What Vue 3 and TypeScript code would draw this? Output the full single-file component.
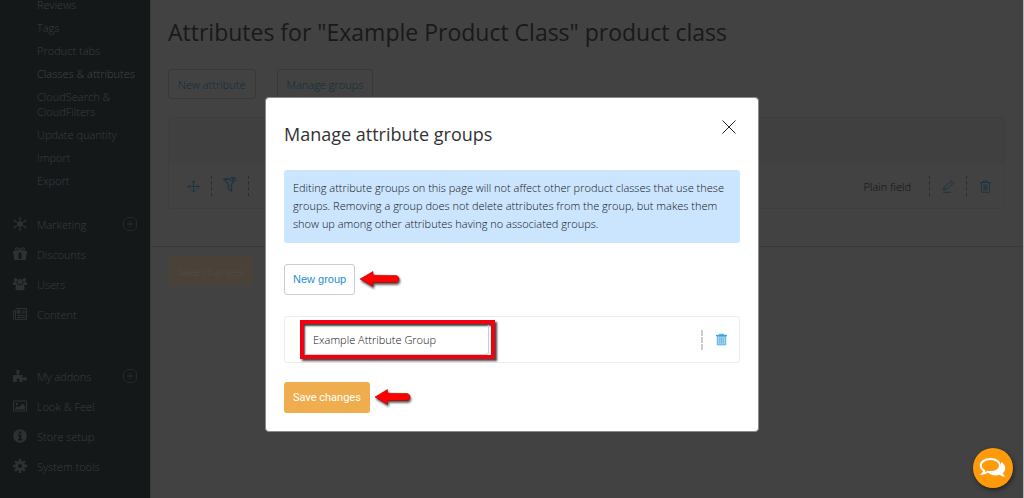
<script setup lang="ts">
import { ref } from 'vue'

interface MenuEntry {
  label: string
  icon: string
  expandable?: boolean
}

const catalogLinks: string[] = [
  'Reviews',
  'Tags',
  'Product tabs',
  'Classes & attributes',
  'CloudSearch & CloudFilters',
  'Update quantity',
  'Import',
  'Export',
]
const currentLink = 'Classes & attributes'

const sections: MenuEntry[][] = [
  [
    { label: 'Marketing', icon: 'hub', expandable: true },
    { label: 'Discounts', icon: 'gift' },
    { label: 'Users', icon: 'users' },
    { label: 'Content', icon: 'news' },
  ],
  [
    { label: 'My addons', icon: 'puzzle', expandable: true },
    { label: 'Look & Feel', icon: 'image' },
    { label: 'Store setup', icon: 'info' },
    { label: 'System tools', icon: 'gear' },
  ],
]

const groupName = ref('Example Attribute Group')
</script>

<template>
  <div class="page">
    <nav class="sidebar" aria-label="Admin menu">
      <ul class="sublinks">
        <li v-for="link in catalogLinks" :key="link">
          <a href="#" :class="{ current: link === currentLink }">{{ link }}</a>
        </li>
      </ul>
      <ul v-for="(section, i) in sections" :key="i" class="section">
        <li v-for="entry in section" :key="entry.label" class="entry">
          <a href="#">
            <svg class="entry-icon" viewBox="0 0 14 14" aria-hidden="true">
              <g v-if="entry.icon === 'hub'">
                <circle cx="7" cy="7" r="2.8" fill="currentColor" />
                <path d="M7 1.5v11M2 4l10 6M12 4L2 10" stroke="currentColor" />
                <g fill="#151819" stroke="currentColor">
                  <circle cx="7" cy="1.4" r="1" /><circle cx="7" cy="12.6" r="1" />
                  <circle cx="1.8" cy="4" r="1" /><circle cx="12.2" cy="4" r="1" />
                  <circle cx="1.8" cy="10" r="1" /><circle cx="12.2" cy="10" r="1" />
                </g>
              </g>
              <g v-else-if="entry.icon === 'gift'">
                <path d="M0 4h14v3.4h-1V13H1V7.400H0z" fill="currentColor" />
                <path d="M7 4C3 4 2.500 3 2.500 2.200 3 .2 5.600.2 7 4 8.400.2 11 .2 11.500 2.200 11.500 3 11 4 7 4z" fill="none" stroke="currentColor" stroke-width="1.200" />
                <path d="M5.600 5.500h2.800v6.500H5.600z" fill="#151819" />
              </g>
              <g v-else-if="entry.icon === 'users'" fill="currentColor">
                <circle cx="2.600" cy="2.800" r="1.900" /><circle cx="11.400" cy="2.800" r="1.900" />
                <circle cx="7" cy="4.600" r="2.700" />
                <path d="M0 8V6.200C0 5 1.600 4.600 3.800 5.200 3.700 6.400 4 7 4.600 8zM14 8V6.200c0-1.200-1.600-1.600-3.800-1C10.300 6.400 10 7 9.400 8z" />
                <path d="M2.400 11.500C2.400 8.500 3.600 7.600 4.800 7.600c1.400 1 3 1 4.400 0 1.200 0 2.400.9 2.400 3.900 0 1.200-.8 1.700-1.800 1.700H4.200c-1 0-1.800-.5-1.800-1.700z" />
              </g>
              <g v-else-if="entry.icon === 'news'" fill="none" stroke="currentColor">
                <path d="M2.500 1.500h11v11h-12c-.7 0-1-.4-1-1v-8h2v8" />
                <path d="M8.500 4h4M8.500 6h4M4 8.500h8.500M4 10.500h8.500" />
                <path d="M4.500 3.500h2v2.500h-2z" stroke-width="1.500" />
              </g>
              <g v-else-if="entry.icon === 'puzzle'">
                <path d="M0 6h3.800C4.600 5 3 4 3.200 2.300 3.400.6 6.400.6 6.600 2.300 6.800 4 5.200 5 6 6h3.500v2.600c1 .8 2-.8 3.300-.4 1.600.6 1.600 2.800 0 3.300-1.300.4-2.300-1-3.300-.2V13H6.400c-.6-1 .6-1.600 0-2.800-.5-.9-2.100-.9-2.600 0-.5 1.200.6 1.800 0 2.800H0z" fill="currentColor" />
              </g>
              <g v-else-if="entry.icon === 'image'">
                <path d="M.5 2h13v10H.5z" fill="none" stroke="currentColor" />
                <circle cx="3.800" cy="5" r="1.200" fill="currentColor" />
                <path d="M2 10.500V9l2.500-2L6 8.200 9.500 4.500 12 7v3.500z" fill="currentColor" />
              </g>
              <g v-else-if="entry.icon === 'info'">
                <circle cx="7" cy="7" r="6.800" fill="currentColor" />
                <path d="M5.800 2.400h2.500v2H5.800zM4.900 5.600h3.400v4.300h1v1.500H4.900V9.900h1V7h-1z" fill="#151819" />
              </g>
              <g v-else>
                <circle cx="7" cy="7" r="3.600" fill="none" stroke="currentColor" stroke-width="3" />
                <path d="M7 0v3M7 11v3M0 7h3M11 7h3M2 2l2.200 2.200M9.800 9.800L12 12M12 2L9.800 4.200M4.200 9.800L2 12" stroke="currentColor" stroke-width="2.400" />
              </g>
            </svg>
            <span>{{ entry.label }}</span>
          </a>
          <button v-if="entry.expandable" type="button" class="expand" :aria-label="`Expand ${entry.label}`">
            <svg viewBox="0 0 14 14" aria-hidden="true">
              <rect x=".5" y=".5" width="13" height="13" rx="4.500" fill="none" stroke="currentColor" />
              <path d="M3.500 7h7M7 3.500v7" stroke="currentColor" />
            </svg>
          </button>
        </li>
      </ul>
    </nav>

    <main class="content">
      <div class="body">
        <h1>Attributes for "Example Product Class" product class</h1>
        <div class="toolbar">
          <button type="button" class="dim-btn">New attribute</button>
          <button type="button" class="dim-btn">Manage groups</button>
        </div>
        <table class="attributes">
          <colgroup>
            <col class="col-move" />
            <col class="col-tool" />
            <col />
            <col class="col-tool" />
            <col class="col-tool" />
          </colgroup>
          <thead>
            <tr><th colspan="5"></th></tr>
          </thead>
          <tbody>
            <tr>
              <td>
                <div class="slot move">
                  <svg class="tool" viewBox="0 0 13 13" fill="none" stroke="currentColor" aria-hidden="true">
                    <path d="M6.500.8v11.400M.8 6.500h11.400M4.500 2.800l2-2 2 2M4.500 10.200l2 2 2-2M2.800 4.500l-2 2 2 2M10.200 4.500l2 2-2 2" />
                  </svg>
                </div>
              </td>
              <td>
                <div class="slot">
                  <svg class="filter" viewBox="0 0 14 20" fill="none" stroke="currentColor" aria-hidden="true">
                    <path d="M7 3H.8l4.700 5.500v4.500l3 2V8.500L10.500 6" stroke-width="1.300" />
                    <ellipse cx="10" cy="3.300" rx="3.400" ry="2" />
                    <circle cx="10" cy="3.300" r="1" fill="currentColor" />
                  </svg>
                </div>
              </td>
              <td><div class="slot type">Plain field</div></td>
              <td>
                <div class="slot">
                  <svg class="tool" viewBox="0 0 13 13" fill="none" stroke="currentColor" aria-hidden="true">
                    <path d="M1.500 10L2.300 7 9.600.8l2.200 2.200-7.300 6.500zM2.300 7l2.200 2.500M8.300 2l2.200 2.200M1 12.300h8" />
                  </svg>
                </div>
              </td>
              <td>
                <div class="slot last">
                  <svg class="tool" viewBox="0 0 13 13" fill="none" stroke="currentColor" aria-hidden="true">
                    <path d="M1 2.500h11M4.500 2V1h4v1M2.500 3v9.300h8V3M5 4.500v6M6.500 4.500v6M8 4.500v6" />
                  </svg>
                </div>
              </td>
            </tr>
          </tbody>
        </table>
      </div>
      <div class="footer">
        <button type="button" class="dim-save">Save changes</button>
      </div>
    </main>

    <div class="overlay">
      <form class="dialog" role="dialog" aria-labelledby="dialog-title" @submit.prevent>
        <header class="dialog-head">
          <h2 id="dialog-title">Manage attribute groups</h2>
          <button type="button" class="close" aria-label="Close">
            <svg viewBox="0 0 14 14" aria-hidden="true">
              <path d="M.5.5l13 13M13.500.5l-13 13" stroke="currentColor" />
            </svg>
          </button>
        </header>
        <p class="notice">
          Editing attribute groups on this page will not affect other product classes that use these
          groups. Removing a group does not delete attributes from the group, but makes them show up
          among other attributes having no associated groups.
        </p>
        <div class="action">
          <button type="button" class="new-group">New group</button>
          <svg class="arrow wide" viewBox="0 0 42 20" aria-hidden="true">
            <path d="M0 9L13 1.500V5.200L36 5.500C40 6 40 12.200 36 12.500L13 12.500V16.500z" fill="#fe0000" stroke="#a00" stroke-width=".6" />
          </svg>
        </div>
        <div class="group-row">
          <label class="highlight">
            <input v-model="groupName" type="text" aria-label="Group name" />
          </label>
          <button type="button" class="remove" aria-label="Delete group">
            <svg viewBox="0 0 13 13" aria-hidden="true">
              <path d="M2.300 3.200h8.400v8.600H2.300z" fill="#a5d6f1" stroke="#55b0e0" />
              <path d="M1 2.500h11" stroke="#3ba3dc" stroke-width="1.400" />
              <path d="M4 1.300h5" stroke="#3ba3dc" />
              <path d="M4.800 4.500v6M6.500 4.500v6M8.200 4.500v6" stroke="#55b0e0" stroke-width=".8" />
            </svg>
          </button>
        </div>
        <div class="action">
          <button type="submit" class="save">Save changes</button>
          <svg class="arrow" viewBox="0 0 38 20" aria-hidden="true">
            <path d="M0 9L12.500 1.500V5.200L32 5.500C36 6 36 12.200 32 12.500L12.500 12.500V16.500z" fill="#fe0000" stroke="#a00" stroke-width=".6" />
          </svg>
        </div>
      </form>
    </div>

    <button type="button" class="chat" aria-label="Live chat">
      <svg viewBox="0 0 28 22" aria-hidden="true">
        <path d="M22 5c5 2.500 5.500 8 2 11 .2 1.500 1 2.500 2.500 3.500-2.500.3-4.300-.4-5.800-1.700C16 19 12 18.300 9.500 16 17 15.500 22.500 11.500 22 5z" fill="#fff" />
        <path d="M11.500 2C6 2 1.800 4.800 1.800 8.600c0 2.200 1.300 4 3.400 5.200-.2 1.300-.8 2.200-1.700 3 2-.1 3.700-.9 5-2 1 .2 2 .3 3 .3 5.400 0 9.500-2.800 9.500-6.500S16.900 2 11.500 2z" fill="#ff9a0a" stroke="#fff" stroke-width="2" />
      </svg>
    </button>
  </div>
</template>

<style>
html,
body {
  background: #424242;
}
</style>

<style scoped>
.page {
  display: flex;
  min-height: 100vh;
  box-sizing: border-box;
  border-right: 1px solid #b4b4b4;
  overflow: hidden;
  font-family: "Open Sans", "Noto Sans", sans-serif;
  font-size: 11px;
  font-weight: 300;
  line-height: 15px;
}

button {
  font: inherit;
  padding: 0;
  border: 0;
  background: none;
}

svg {
  display: block;
}

ul {
  list-style: none;
  margin: 0;
  padding: 0;
}

.sidebar {
  flex: none;
  width: 150px;
  box-sizing: border-box;
  background: #151819;
  color: #373e45;
}

.sidebar a {
  color: inherit;
  text-decoration: none;
}

.sidebar a.current {
  color: #464646;
}

.sublinks {
  display: grid;
  gap: 8px;
  margin-top: -3px;
  padding: 0 8px 0 37px;
}

.section {
  padding-top: 21px;
}

.section + .section {
  padding-top: 32px;
}

.entry {
  display: flex;
  align-items: center;
  justify-content: space-between;
  height: 30px;
  padding: 0 13px;
}

.entry a {
  display: flex;
  align-items: center;
  gap: 10px;
}

.entry-icon {
  width: 14px;
  height: 14px;
  color: #2f3030;
}

.expand {
  width: 14px;
  height: 14px;
  color: #24292a;
}

.content {
  flex: 1;
  min-width: 0;
  border-left: 1px solid #3b3b3b;
  background: #424242;
}

.body {
  padding: 17px 18px 37px 17px;
}

h1 {
  margin: 0;
  font-size: 23px;
  line-height: 30px;
  font-weight: 400;
  color: #191919;
}

.toolbar {
  display: flex;
  gap: 21px;
  margin-top: 22px;
}

.dim-btn {
  height: 30px;
  padding: 0 9px;
  border: 1px solid #383838;
  border-radius: 3px;
  color: #102c3b;
}

.attributes {
  width: 100%;
  margin-top: 18px;
  border: 1px solid #3e3e3e;
  border-radius: 3px;
  border-spacing: 0;
  table-layout: fixed;
}

.attributes th {
  height: 46px;
  padding: 0;
  background: #404040;
}

.attributes td {
  height: 44px;
  padding: 0;
}

.col-move {
  width: 43px;
}

.col-tool {
  width: 37px;
}

.slot {
  display: flex;
  align-items: center;
  justify-content: center;
  height: 20px;
  border-right: 1px dashed #2a2a2a;
  color: #1d3543;
}

.slot.move {
  padding-left: 6px;
}

.slot.last {
  border-right: 0;
}

.slot.type {
  justify-content: flex-end;
  padding-right: 18px;
  color: #111;
}

.tool {
  width: 13px;
  height: 13px;
}

.filter {
  width: 14px;
  height: 20px;
}

.footer {
  padding: 9px 17px;
  border-top: 1px solid #383838;
}

.dim-save {
  height: 30px;
  padding: 0 9px;
  border-radius: 3px;
  background: #4a4238;
  color: #544c43;
}

.overlay {
  position: fixed;
  inset: 0;
  display: flex;
  justify-content: center;
  align-items: flex-start;
  padding-top: 97px;
}

.dialog {
  width: 100%;
  max-width: 494px;
  box-sizing: border-box;
  padding: 18px;
  border: 1px solid #8a8a8a;
  border-radius: 4px;
  background: #fff;
  color: #333;
}

.dialog-head {
  display: flex;
  justify-content: space-between;
  align-items: flex-start;
  margin-bottom: 22px;
}

h2 {
  margin: 4px 0 0;
  font-size: 18px;
  line-height: 28px;
  font-weight: 400;
}

.close {
  width: 14px;
  height: 14px;
  margin: 4px 4px 0;
  color: #222;
}

.notice {
  margin: 0 0 21px;
  padding: 9px 9px 10px;
  border-radius: 3px;
  background: #cbe5ff;
  line-height: 18px;
  color: #111;
}

.action {
  display: flex;
  align-items: center;
  gap: 5px;
}

.new-group,
.save {
  height: 31px;
  border-radius: 3px;
  font-weight: 400;
}

.new-group {
  padding: 0 8px;
  border: 1px solid #ccc;
  font-family: "Liberation Sans", sans-serif;
  color: #1e90cd;
}

.save {
  padding: 0 9px;
  background: #f0ad4e;
  font-family: Roboto, "Liberation Sans", sans-serif;
  color: #fff;
}

.arrow {
  width: 38px;
  height: 20px;
  overflow: visible;
  filter: drop-shadow(1px 2px 1px #555);
}

.arrow.wide {
  width: 42px;
}

.group-row {
  display: flex;
  align-items: center;
  justify-content: space-between;
  height: 47px;
  box-sizing: border-box;
  margin: 21px 0 19px;
  padding-left: 15px;
  border: 1px solid #ececec;
  border-radius: 3px;
}

.highlight {
  padding-right: 2px;
  border: 4px solid #f00010;
  box-shadow: 2px 2px 2px #444, inset 1px 2px 2px #444;
}

.highlight input {
  display: block;
  width: 185px;
  height: 31px;
  box-sizing: border-box;
  padding: 0 8px;
  border: 1px solid #ccc;
  border-top-color: transparent;
  border-left-color: transparent;
  border-radius: 3px;
  background: transparent;
  font: inherit;
  color: #111;
}

.remove {
  display: flex;
  align-items: center;
  justify-content: center;
  width: 38px;
  height: 20px;
  border-left: 2px dashed #ccc;
}

.remove svg {
  width: 13px;
  height: 13px;
}

.chat {
  position: fixed;
  right: 11px;
  bottom: 10px;
  display: flex;
  align-items: center;
  justify-content: center;
  width: 40px;
  height: 40px;
  border-radius: 50%;
  background: #ff9a0a;
  box-shadow: 1px 2px 4px #222;
}

.chat svg {
  width: 28px;
  height: 22px;
}
</style>
